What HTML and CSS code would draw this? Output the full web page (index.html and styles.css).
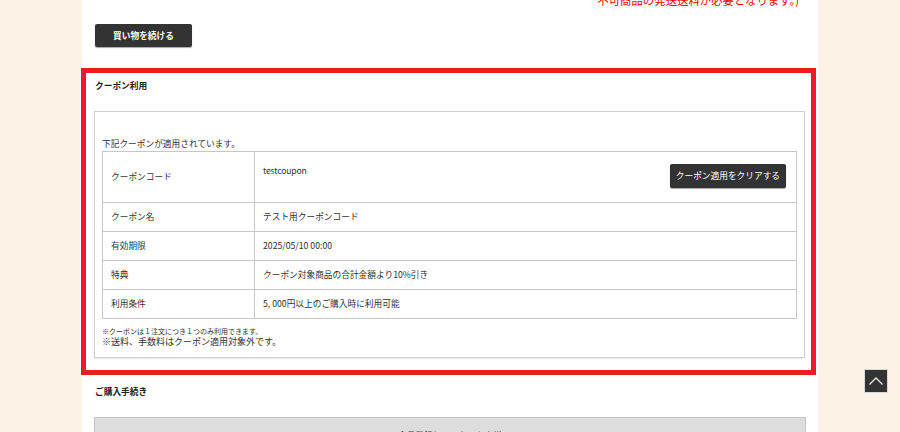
FILE: index.html
```html
<!DOCTYPE html>
<html lang="ja">
<head>
<meta charset="utf-8">
<title>カート</title>
<link rel="stylesheet" href="styles.css">
</head>
<body>
<div class="page">
  <p class="notice">不可商品の発送送料が必要となります。)</p>
  <div class="continue-row">
    <a class="btn-dark btn-continue" href="#">買い物を続ける</a>
  </div>

  <section class="coupon">
    <h2 class="sec-title">クーポン利用</h2>
    <div class="coupon-box">
      <p class="applied">下記クーポンが適用されています。</p>
      <table class="coupon-table">
        <tr class="row-code">
          <th>クーポンコード</th>
          <td>
            <div class="code-cell">
              <span class="code">testcoupon</span>
              <a class="btn-dark btn-clear" href="#">クーポン適用をクリアする</a>
            </div>
          </td>
        </tr>
        <tr>
          <th>クーポン名</th>
          <td>テスト用クーポンコード</td>
        </tr>
        <tr>
          <th>有効期限</th>
          <td>2025/05/10 00:00</td>
        </tr>
        <tr>
          <th>特典</th>
          <td>クーポン対象商品の合計金額より10%引き</td>
        </tr>
        <tr>
          <th>利用条件</th>
          <td>5, 000円以上のご購入時に利用可能</td>
        </tr>
      </table>
      <div class="notes">
        <p class="note-small">※クーポンは１注文につき１つのみ利用できます。</p>
        <p class="note-large">※送料、手数料はクーポン適用対象外です。</p>
      </div>
    </div>
  </section>

  <section class="checkout">
    <h2 class="sec-title">ご購入手続き</h2>
    <div class="guest-box">会員登録していないお客様</div>
  </section>
</div>

<a class="pagetop" href="#" aria-label="ページトップへ">
  <svg width="16" height="10" viewBox="0 0 16 10"><polyline points="1.5,8.5 8,2 14.5,8.5" fill="none" stroke="#e6e6e6" stroke-width="1.3"/></svg>
</a>
</body>
</html>
```

FILE: styles.css
```css
* { box-sizing: border-box; }

html, body {
  margin: 0;
  padding: 0;
}

body {
  background: #faf3e6;
  font-family: "Noto Sans CJK JP", "Noto Sans", sans-serif;
  font-size: 8.7px;
  color: #333;
  overflow: hidden;
}

.page {
  width: 736px;
  margin: 0 auto;
  background: #fff;
  min-height: 432px;
  padding-bottom: 40px;
}

.notice {
  margin: -7px 0 0 0;
  padding-right: 19px;
  text-align: right;
  color: #ff0000;
  font-size: 11.4px;
  line-height: 14px;
}

.continue-row {
  display: flex;
  padding-left: 13px;
  margin-top: 17px;
  margin-bottom: 21px;
}

.btn-dark {
  display: inline-flex;
  align-items: center;
  justify-content: center;
  background: #333;
  color: #fff;
  text-decoration: none;
  border-radius: 2px;
  box-shadow: 0 1px 1px rgba(0, 0, 0, 0.35);
  white-space: nowrap;
}

.btn-continue {
  height: 23px;
  width: 97px;
  font-weight: bold;
  font-size: 8.7px;
}

.coupon {
  border: 5px solid #ed1c24;
  margin: 0 2px 0 -1px;
  padding: 6px 6px 12px 8px;
}

.sec-title {
  margin: 0;
  font-size: 8.7px;
  line-height: 14px;
  font-weight: bold;
  color: #222;
}

.coupon .sec-title {
  padding-left: 1px;
}

.coupon-box {
  margin-top: 18px;
  border: 1px solid #cfcfcf;
  box-shadow: 0 1px 1px rgba(0, 0, 0, 0.08);
  padding: 25px 7px 9px 7px;
}

.applied {
  margin: 0;
  line-height: 14px;
}

.coupon-table {
  width: 100%;
  border-collapse: collapse;
}

.coupon-table th,
.coupon-table td {
  border: 1px solid #c8c8c8;
  padding: 7px 10px 7px 8px;
  line-height: 14px;
  text-align: left;
  font-weight: normal;
  vertical-align: middle;
}

.coupon-table th {
  width: 152px;
}

.row-code td {
  padding-top: 12px;
  padding-bottom: 14px;
  vertical-align: top;
}

.code-cell {
  display: flex;
  justify-content: space-between;
  align-items: flex-start;
}

.code {
  line-height: 14px;
  letter-spacing: -0.2px;
}

.btn-clear {
  height: 24px;
  padding: 0 6px;
  font-size: 8.7px;
}

.notes {
  margin-top: 7px;
}

.notes p {
  margin: 0;
}

.note-small {
  font-size: 7px;
  line-height: 10px;
}

.note-large {
  font-size: 9px;
  line-height: 12px;
}

.checkout {
  padding: 10px 12px 0 12px;
}

.checkout .sec-title {
  padding-left: 1px;
}

.guest-box {
  margin-top: 18px;
  background: #dddddd;
  border: 1px solid #c6c6c6;
  text-align: center;
  padding: 11px 0;
  line-height: 14px;
  color: #333;
}

.pagetop {
  position: fixed;
  right: 12px;
  bottom: 39px;
  width: 24px;
  height: 24px;
  background: #333;
  border: 1px solid #d8d8d8;
  display: flex;
  align-items: center;
  justify-content: center;
}
```
